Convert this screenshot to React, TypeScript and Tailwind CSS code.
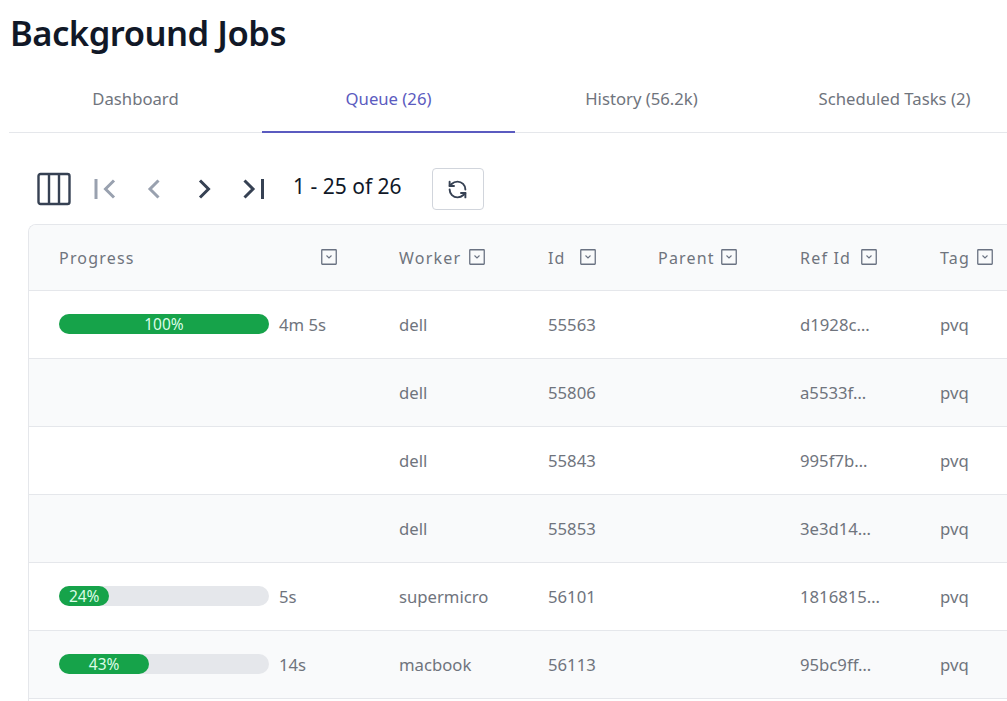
import { RefreshCcw } from "lucide-react";

const FONT = "font-['Noto_Sans','Liberation_Sans',sans-serif]";

const tabs = [
  { label: "Dashboard" },
  { label: "Queue (26)", active: true },
  { label: "History (56.2k)" },
  { label: "Scheduled Tasks (2)" },
];

const columns = [
  { label: "Progress", width: "w-[370px] pl-[30px]", filter: "ml-[186px]" },
  { label: "Worker", width: "w-[149px]", filter: "ml-[8px]" },
  { label: "Id", width: "w-[110px]", filter: "ml-[14px]" },
  { label: "Parent", width: "w-[142px]", filter: "ml-[6px]" },
  { label: "Ref Id", width: "w-[140px]", filter: "ml-[10px]" },
  { label: "Tag", width: "w-[100px]", filter: "ml-[7px]" },
];

const rows = [
  { pct: 100, time: "4m 5s", worker: "dell", id: "55563", ref: "d1928c…" },
  { worker: "dell", id: "55806", ref: "a5533f…" },
  { worker: "dell", id: "55843", ref: "995f7b…" },
  { worker: "dell", id: "55853", ref: "3e3d14…" },
  { pct: 24, time: "5s", worker: "supermicro", id: "56101", ref: "1816815…" },
  { pct: 43, time: "14s", worker: "macbook", id: "56113", ref: "95bc9ff…" },
  { worker: "", id: "", ref: "" },
];

function FilterIcon({ className }: { className: string }) {
  return (
    <svg viewBox="0 0 16 16" className={`h-4 w-4 shrink-0 text-gray-500 ${className}`} fill="none" stroke="currentColor">
      <rect x="0.75" y="0.75" width="14.5" height="14.5" rx="0.5" strokeWidth="1.3" />
      <path d="M5.5 6.5 8 9l2.5-2.5" strokeWidth="1.1" />
    </svg>
  );
}

function Pager({ d, faded }: { d: string; faded?: boolean }) {
  return (
    <svg viewBox="0 0 24 24" className={`h-6 w-6 ${faded ? "text-gray-400" : "text-gray-700"}`} fill="none" stroke="currentColor" strokeWidth="3">
      <path d={d} />
    </svg>
  );
}

function Progress({ pct, time }: { pct: number; time: string }) {
  return (
    <div className="flex items-center">
      <div className="h-5 w-[210px] rounded-full bg-gray-200">
        <div
          className="flex h-5 items-center justify-center rounded-full bg-[#16a34a] text-[15.5px] leading-5 text-green-100"
          style={{ width: `${pct}%` }}
        >
          {pct}%
        </div>
      </div>
      <span className="ml-[10px]">{time}</span>
    </div>
  );
}

export default function App() {
  return (
    <div className={`${FONT} h-[701px] w-[1007px] overflow-hidden bg-white`}>
      <h1 className="pl-[10px] pt-[9px] text-[34.6px] leading-[48px] font-semibold tracking-[-0.5px] text-[#111827]">
        Background Jobs
      </h1>

      <div className="ml-[9px] mt-[10px] flex w-[1012px] border-b border-gray-200">
        {tabs.map((t) => (
          <div
            key={t.label}
            className={`-mb-px h-[66px] w-[253px] shrink-0 border-b-2 pt-[20px] text-center text-[16.7px] leading-6 ${
              t.active ? "border-[#5b5bc0] text-[#5b5bc0]" : "border-transparent text-[#6f747d]"
            }`}
          >
            {t.label}
          </div>
        ))}
      </div>

      <div className="flex h-[91px] items-center pl-[37px] pt-[21px]">
        <svg viewBox="0 0 34 34" className="h-[34px] w-[34px] text-gray-700" fill="none" stroke="currentColor" strokeWidth="2.4">
          <rect x="1.5" y="2" width="31" height="30" rx="2" />
          <path d="M12 2v30M22 2v30" />
        </svg>
        <div className="ml-[21px] flex gap-[26px]">
          <Pager faded d="M4 2v20M22 3.5l-8.5 8.5 8.5 8.5" />
          <Pager faded d="M16.5 3.5l-8.5 8.5 8.5 8.5" />
          <Pager d="M8 3.5l8.5 8.5-8.5 8.5" />
          <Pager d="M2.5 3.5l8.5 8.5-8.5 8.5M20.5 2v20" />
        </div>
        <span className="ml-[27px] -mt-[5px] text-[21px] text-gray-900">1 - 25 of 26</span>
        <div className="ml-[30px] flex h-[42px] w-[52px] items-center justify-center rounded border border-gray-300">
          <RefreshCcw size={21} strokeWidth={2.2} className="text-gray-700" />
        </div>
      </div>

      <div className="ml-[28px] w-[1060px] overflow-hidden rounded-tl-lg border-l border-t border-gray-200 text-[16.7px] text-[#6f747d]">
        <div className="flex h-[66px] items-center border-b border-gray-200 bg-[#f9fafb] text-[16px]">
          {columns.map((c) => (
            <div key={c.label} className={`${c.width} flex shrink-0 items-center tracking-[1.2px]`}>
              <span className="whitespace-nowrap">{c.label}</span>
              <FilterIcon className={`${c.filter} -mt-[2px]`} />
            </div>
          ))}
        </div>
        {rows.map((r, i) => (
          <div
            key={i}
            className={`flex h-[68px] items-center border-b border-gray-200 ${i % 2 === 1 ? "bg-[#f9fafb]" : "bg-white"}`}
          >
            <div className="w-[370px] shrink-0 pl-[30px]">
              {r.pct !== undefined && <Progress pct={r.pct} time={r.time} />}
            </div>
            <div className="w-[149px] shrink-0">{r.worker}</div>
            <div className="w-[110px] shrink-0">{r.id}</div>
            <div className="w-[142px] shrink-0" />
            <div className="w-[140px] shrink-0">{r.ref}</div>
            <div className="w-[100px] shrink-0">{r.id ? "pvq" : ""}</div>
          </div>
        ))}
      </div>
    </div>
  );
}
